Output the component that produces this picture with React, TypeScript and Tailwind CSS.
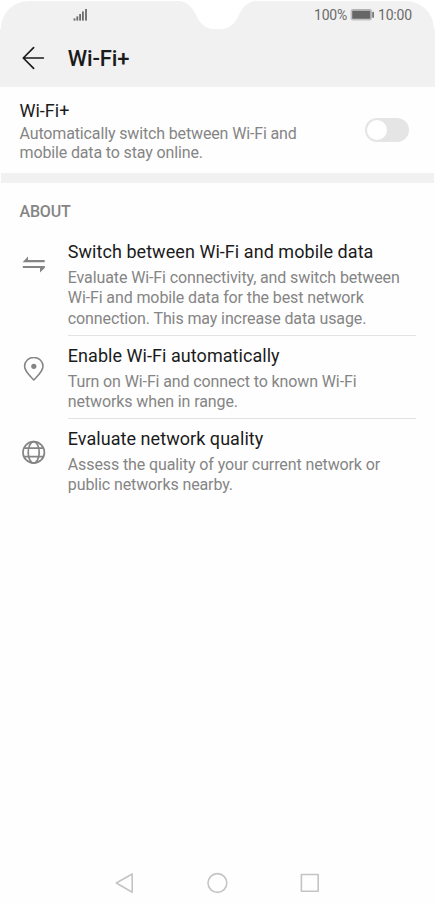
import type { ReactNode } from "react";

function StatusBar() {
  return (
    <div className="flex h-[30px] items-center pr-[23px] pl-[73px] text-[14px] text-[#6b6b6b]">
      <svg className="h-3 w-[14px]" viewBox="0 0 14 12" fill="#6b6b6b">
        <rect x="0.6" y="9.4" width="1.8" height="2.2" />
        <rect x="3.4" y="7.4" width="1.8" height="4.2" />
        <rect x="6.2" y="5" width="1.8" height="6.6" />
        <rect x="9" y="2.4" width="1.8" height="9.2" />
        <rect x="12.1" y="-0.5" width="1.8" height="12.1" />
      </svg>
      <span className="ml-auto w-[33px] tracking-[-0.2px] whitespace-nowrap">100%</span>
      <svg className="ml-[3px] h-3 w-6" viewBox="0 0 24 12">
        <rect x="1.2" y="0.5" width="20.2" height="10.4" rx="1.2" fill="#dcdcdc" stroke="#b4b4b4" />
        <rect x="2.2" y="1.6" width="18.2" height="8.2" fill="#666" />
        <rect x="22.2" y="2.8" width="1.8" height="6" rx="0.6" fill="#777" />
      </svg>
      <span className="ml-1 w-[34px] tracking-[-0.2px] whitespace-nowrap">10:00</span>
    </div>
  );
}

function SwapIcon() {
  return (
    <svg className="h-6 w-6" viewBox="0 0 24 24" fill="#858585">
      <path d="M.6 9.2 6 3.6v3.5h16.7v2.1H.6z" />
      <path d="M.8 13.1h22.1v1.6L18 19.6v-4.5H.8z" />
    </svg>
  );
}

function PinIcon() {
  return (
    <svg className="h-6 w-6" viewBox="0 0 24 24" fill="none" stroke="#858585" strokeWidth="1.6">
      <path d="M11.8 22.9C8.3 19.2 2.6 14.6 2.6 9.3a9.2 8.9 0 0 1 18.4 0c0 5.3-5.7 9.9-9.2 13.6z" strokeLinejoin="round" />
      <circle cx="11.8" cy="9.3" r="2.6" fill="#858585" stroke="none" />
    </svg>
  );
}

function GlobeIcon() {
  return (
    <svg className="h-6 w-6" viewBox="0 0 24 24" fill="none" stroke="#858585" strokeWidth="1.7">
      <circle cx="11.7" cy="12.4" r="10.7" />
      <ellipse cx="11.7" cy="12.4" rx="5.5" ry="10.7" />
      <path d="M2.2 8.2h19M2.2 16.7h19" />
    </svg>
  );
}

type FeatureProps = { icon: ReactNode; title: string; lines: string[]; divider?: boolean; rowClass: string; textClass: string; iconClass: string };

function Feature({ icon, title, lines, divider, rowClass, textClass, iconClass }: FeatureProps) {
  return (
    <div className={`flex pr-[19px] pl-[22px] ${rowClass}`}>
      <div className={`w-[45.8px] shrink-0 ${iconClass}`}>{icon}</div>
      <div className={`flex-1 ${textClass} ${divider ? "border-b border-[#e3e3e3]" : ""}`}>
        <h2 className="text-[18px] leading-6 tracking-[0.05px] whitespace-nowrap text-[#1b1b1b]">{title}</h2>
        <p className="mt-[3.75px] text-[16px] leading-[20.5px] tracking-[-0.11px] text-[#858585]">
          {lines.map((line) => (
            <span key={line} className="block whitespace-nowrap">{line}</span>
          ))}
        </p>
      </div>
    </div>
  );
}

export default function App() {
  return (
    <div className="relative flex h-[904px] w-[435px] flex-col overflow-hidden bg-[#fefefe] font-['Roboto',sans-serif]">
      <header className="h-[87px] shrink-0 bg-[#f1f1f1]">
        <StatusBar />
        <div className="flex h-14 items-center pl-[22px]">
          <svg className="h-6 w-[23px]" viewBox="0 0 23 24" fill="none" stroke="#1b1b1b" strokeWidth="1.7" strokeLinecap="round" strokeLinejoin="round">
            <path d="M21.3 12H1.3M11.6 1.7 1.3 12l10.3 10.3" />
          </svg>
          <h1 className="mt-0.5 ml-[22.7px] text-[22px] leading-7 font-medium tracking-[-0.1px] text-[#1b1b1b]">Wi-Fi+</h1>
        </div>
      </header>
      <svg className="absolute top-0 left-0 h-[31px] w-[435px]" viewBox="0 0 435 31" fill="#fff">
        <path d="M0 0H435V29H434C434 13 421 1 405 1H258C247 1 242 8 238 17C234 25 228 29 221 29H214C207 29 201 25 197 17C193 8 188 1 177 1H30C13 1 1 13 1 29H0z" />
      </svg>
      <section className="flex h-[86px] shrink-0 items-start justify-between pr-[26px] pl-[19.5px]">
        <div className="pt-3">
          <h2 className="text-[18px] leading-6 text-[#1b1b1b]">Wi-Fi+</h2>
          <p className="mt-px text-[16px] leading-[19px] tracking-[-0.14px] whitespace-nowrap text-[#858585]">
            Automatically switch between Wi-Fi and<br />mobile data to stay online.
          </p>
        </div>
        <div className="mt-[31px] h-6 w-11 rounded-full bg-[#e5e5e5] p-0.5">
          <div className="h-5 w-5 rounded-full bg-white" />
        </div>
      </section>
      <div className="mr-px ml-px h-[10px] shrink-0 bg-[#f1f1f1]" />
      <h3 className="h-[48px] shrink-0 pt-[19px] pl-[19.5px] text-[16px] leading-5 font-medium tracking-[-0.2px] text-[#858585]">ABOUT</h3>
      <Feature
        rowClass="h-[105px]"
        textClass="pt-[9px]"
        iconClass="pt-[22px]"
        icon={<SwapIcon />}
        title="Switch between Wi-Fi and mobile data"
        lines={["Evaluate Wi-Fi connectivity, and switch between", "Wi-Fi and mobile data for the best network", "connection. This may increase data usage."]}
        divider
      />
      <Feature
        rowClass="h-[83px]"
        textClass="pt-2"
        iconClass="pt-[21px]"
        icon={<PinIcon />}
        title="Enable Wi-Fi automatically"
        lines={["Turn on Wi-Fi and connect to known Wi-Fi", "networks when in range."]}
        divider
      />
      <Feature
        rowClass="h-[83px]"
        textClass="pt-2"
        iconClass="pt-[21px]"
        icon={<GlobeIcon />}
        title="Evaluate network quality"
        lines={["Assess the quality of your current network or", "public networks nearby."]}
      />
      <nav className="mt-auto flex h-[42px] items-center pl-[114px]">
        <svg className="h-[22px] w-[20px]" viewBox="0 0 20 22" fill="none" stroke="#c4c4c4" strokeWidth="1.6" strokeLinejoin="round">
          <path d="M18.2 2v18.2L2.3 11z" />
        </svg>
        <svg className="ml-[72px] h-[22px] w-[22px]" viewBox="0 0 22 22" fill="none" stroke="#c4c4c4" strokeWidth="1.6">
          <circle cx="11.4" cy="11" r="9.4" />
        </svg>
        <svg className="ml-[72px] h-[20px] w-[20px]" viewBox="0 0 20 20" fill="none" stroke="#c4c4c4" strokeWidth="1.6" strokeLinejoin="round">
          <rect x="1.4" y="1.5" width="16.8" height="16.8" />
        </svg>
      </nav>
    </div>
  );
}
